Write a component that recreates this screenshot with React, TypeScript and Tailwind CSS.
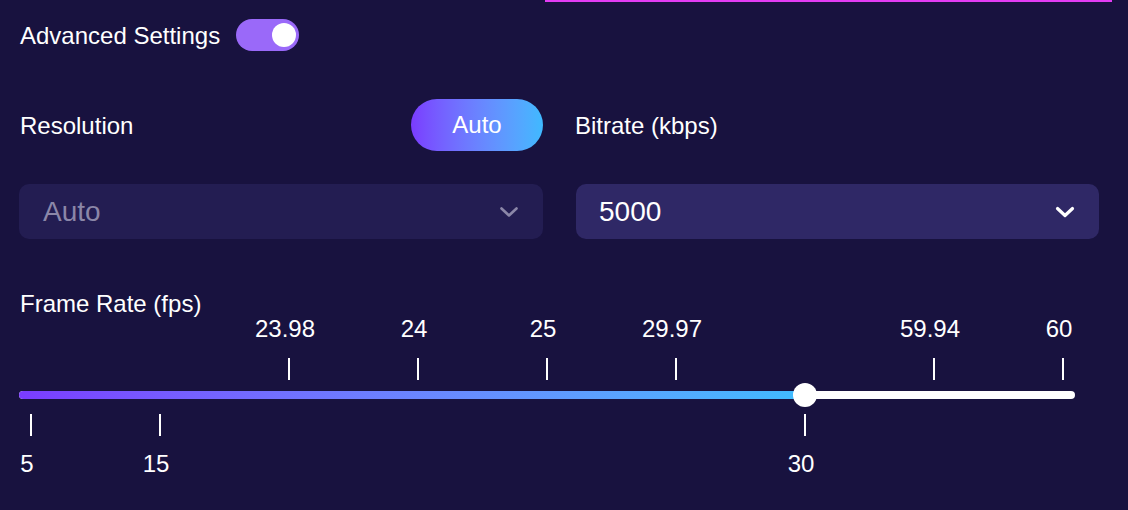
import React from "react";

const TICKS = [
  { v: "5", pos: "below" },
  { v: "15", pos: "below" },
  { v: "23.98", pos: "above" },
  { v: "24", pos: "above" },
  { v: "25", pos: "above" },
  { v: "29.97", pos: "above" },
  { v: "30", pos: "below" },
  { v: "59.94", pos: "above" },
  { v: "60", pos: "above" },
];

const STEP = 129;
const TICK0 = 12;
const LABEL0 = 8;

function Chevron({ color, width }: { color: string; width: number }) {
  return (
    <svg width="20" height="12" viewBox="0 0 20 12" fill="none">
      <polyline
        points="2.5,2.5 10,9.5 17.5,2.5"
        stroke={color}
        strokeWidth={width}
        strokeLinecap="round"
        strokeLinejoin="round"
      />
    </svg>
  );
}

export default function App() {
  const thumbX = 786;
  return (
    <div
      className="min-h-screen w-full bg-[#18123f] text-white"
      style={{ fontFamily: '"Liberation Sans", Arial, Helvetica, sans-serif' }}
    >
      <div className="h-[2px] w-[567px] ml-[545px] bg-[#e23cf4]" />
      <div className="px-[19px] w-[1118px]">
        {/* Advanced settings */}
        <div className="flex items-center gap-4 mt-[17px] h-[32px] pl-[1px]">
          <span className="text-[24px] leading-none pt-[2px]">Advanced Settings</span>
          <div className="w-[63px] h-[32px] rounded-full bg-[#9a69f9] flex items-center justify-end pr-[3px]">
            <div className="w-6 h-6 rounded-full bg-white" />
          </div>
        </div>

        {/* Labels row */}
        <div className="grid grid-cols-[524px_523px] gap-[33px] mt-[48px]">
          <div className="flex items-center justify-between h-[52px]">
            <span className="text-[24px] leading-none pl-[1px] pt-[2px]">Resolution</span>
            <button className="w-[132px] h-[52px] rounded-full bg-gradient-to-r from-[#7a3bff] to-[#3fb9ff] text-[24px] leading-none text-white">
              Auto
            </button>
          </div>
          <div className="flex items-center h-[52px]">
            <span className="text-[24px] leading-none pt-[2px] -ml-[1px]">Bitrate (kbps)</span>
          </div>
        </div>

        {/* Selects */}
        <div className="grid grid-cols-[524px_523px] gap-[33px] mt-[33px]">
          <div className="h-[55px] rounded-[10px] bg-[#231d52] flex items-center justify-between pl-6 pr-[24px]">
            <span className="text-[28px] leading-none text-[#8b87a8]">Auto</span>
            <Chevron color="#8b87a8" width={2.6} />
          </div>
          <div className="h-[55px] rounded-[10px] bg-[#2f2866] flex items-center justify-between pl-[23px] pr-[24px]">
            <span className="text-[28px] leading-none text-white">5000</span>
            <Chevron color="#ffffff" width={3.2} />
          </div>
        </div>

        {/* Frame rate */}
        <div className="mt-[53px] text-[24px] leading-none pl-[1px]">Frame Rate (fps)</div>

        <div className="flex flex-col w-[1056px]">
          {/* upper labels */}
          <div className="relative h-[24px] mt-[1px]">
            {TICKS.map((t, i) =>
              t.pos === "above" ? (
                <span
                  key={t.v}
                  className="absolute top-0 text-[24px] leading-none -translate-x-1/2 whitespace-nowrap"
                  style={{ left: LABEL0 + STEP * i }}
                >
                  {t.v}
                </span>
              ) : null
            )}
          </div>
          {/* upper ticks */}
          <div className="relative h-[22px] mt-[17px]">
            {TICKS.map((t, i) =>
              t.pos === "above" ? (
                <div
                  key={t.v}
                  className="absolute top-0 w-[2px] h-[22px] bg-white"
                  style={{ left: TICK0 - 1 + STEP * i }}
                />
              ) : null
            )}
          </div>
          {/* track */}
          <div className="relative h-[8px] mt-[11px] rounded-full bg-white">
            <div
              className="absolute left-0 top-0 h-[8px] rounded-l-full bg-gradient-to-r from-[#7a3bff] to-[#3fbcff]"
              style={{ width: thumbX }}
            />
            <div
              className="absolute top-[-8px] w-6 h-6 rounded-full bg-white -translate-x-1/2"
              style={{ left: thumbX }}
            />
          </div>
          {/* lower ticks */}
          <div className="relative h-[22px] mt-[15px]">
            {TICKS.map((t, i) =>
              t.pos === "below" ? (
                <div
                  key={t.v}
                  className="absolute top-0 w-[2px] h-[22px] bg-white"
                  style={{ left: TICK0 - 1 + STEP * i }}
                />
              ) : null
            )}
          </div>
          {/* lower labels */}
          <div className="relative h-[24px] mt-[16px]">
            {TICKS.map((t, i) =>
              t.pos === "below" ? (
                <span
                  key={t.v}
                  className="absolute top-0 text-[24px] leading-none -translate-x-1/2 whitespace-nowrap"
                  style={{ left: LABEL0 + STEP * i }}
                >
                  {t.v}
                </span>
              ) : null
            )}
          </div>
        </div>
      </div>
    </div>
  );
}
